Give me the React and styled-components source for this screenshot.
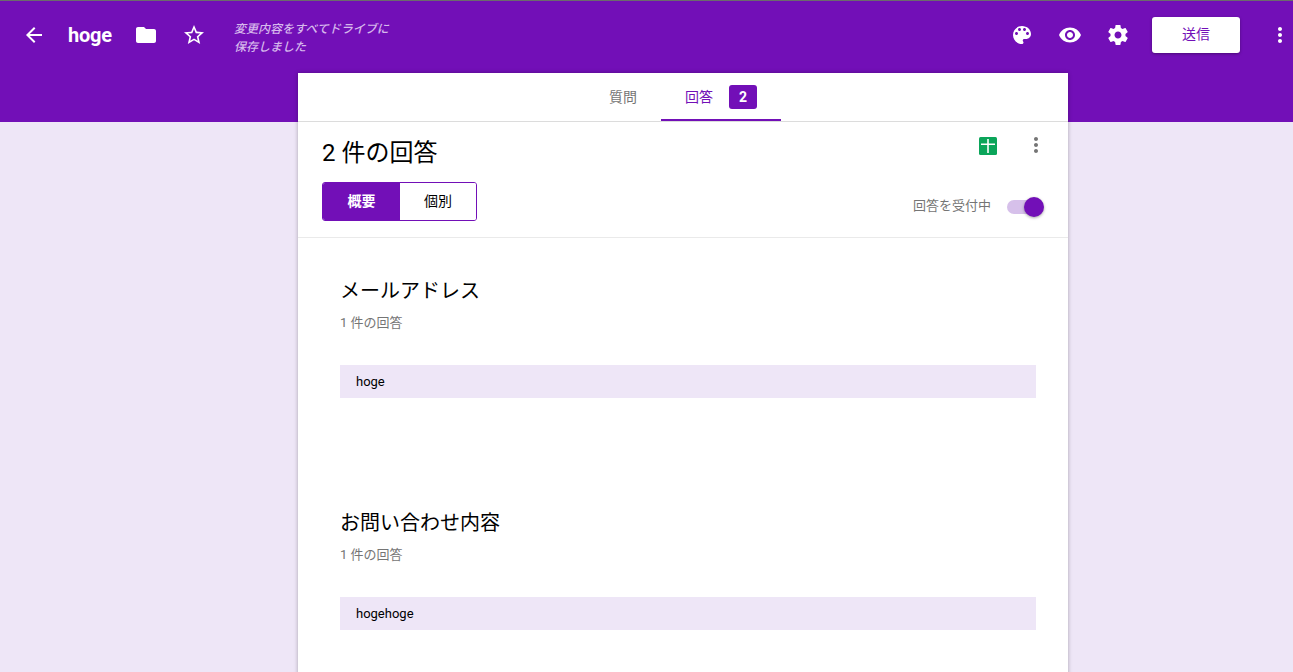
import React from "react";
import styled, { createGlobalStyle } from "styled-components";

const PURPLE = "#720fb7";
const TINT = "#eee6f7";

const Global = createGlobalStyle`
  html, body { margin: 0; padding: 0; height: 100%; overflow: hidden; }
  body { font-family: Roboto, "Noto Sans CJK JP", sans-serif; color: #000; }
  * { box-sizing: border-box; }
`;

const Page = styled.div`
  height: 672px;
  overflow: hidden;
  border-top: 1px solid #6b6b6b;
  background: linear-gradient(${PURPLE} 121px, ${TINT} 121px);
`;

const Toolbar = styled.header`
  display: flex;
  align-items: center;
  height: 72px;
  padding: 0 1px 4px 22px;
`;

const IconBox = styled.span`
  display: inline-flex;
  width: 24px;
  height: 24px;
  flex: none;
  margin-left: ${(p) => p.$ml || 0}px;
  margin-top: ${(p) => p.$mt || 0}px;
  color: ${(p) => p.$color || "#fff"};
  svg { display: block; width: 24px; height: 24px; fill: currentColor; }
`;

const DocName = styled.h1`
  margin: 0 0 0 22px;
  width: 44px;
  font-size: 20px;
  font-weight: 700;
  letter-spacing: -0.2px;
  line-height: 24px;
  color: #fff;
  white-space: nowrap;
`;

const SaveNote = styled.p`
  margin: 6px 0 0 28px;
  width: 160px;
  font-size: 12px;
  font-style: italic;
  font-weight: 500;
  line-height: 18px;
  color: #d6b8ec;
`;

const ToolbarEnd = styled.div`
  display: flex;
  align-items: center;
  margin-left: auto;
`;

const SendButton = styled.button`
  width: 88px;
  height: 36px;
  margin-left: 22px;
  padding: 0 0 4px;
  border: 0;
  border-radius: 3px;
  background: #fff;
  color: ${PURPLE};
  font: 400 14px Roboto, "Noto Sans CJK JP", sans-serif;
  box-shadow: 0 1px 3px rgba(0, 0, 0, 0.35);
`;

const Card = styled.main`
  width: 770px;
  margin: 0 0 0 298px;
  background: #fff;
  box-shadow: 0 0 4px rgba(0, 0, 0, 0.3);
`;

const Tabs = styled.nav`
  display: flex;
  justify-content: center;
  height: 49px;
  border-bottom: 1px solid #dcdcdc;
`;

const Tab = styled.div`
  display: flex;
  align-items: center;
  gap: 16px;
  height: 48px;
  padding: 2px 24px 0;
  font-size: 14px;
  color: ${(p) => (p.$active ? PURPLE : "#757575")};
  border-bottom: 2px solid ${(p) => (p.$active ? PURPLE : "transparent")};
`;

const TabLabel = styled.span`
  padding-bottom: 2px;
`;

const Badge = styled.span`
  display: inline-flex;
  align-items: center;
  justify-content: center;
  width: 28px;
  height: 24px;
  border-radius: 3px;
  background: ${PURPLE};
  color: #fff;
  font-size: 14px;
  font-weight: 700;
`;

const Head = styled.section`
  padding: 12px 24px 16px;
  border-bottom: 1px solid #eaeaea;
`;

const HeadTop = styled.div`
  display: flex;
  justify-content: space-between;
  align-items: flex-start;
  height: 34px;
`;

const Title = styled.h2`
  margin: 0;
  padding-top: 3px;
  font-size: 24px;
  font-weight: 400;
  line-height: 32px;
`;

const HeadActions = styled.div`
  display: flex;
  gap: 24px;
  margin-right: -4px;
`;

const HeadBottom = styled.div`
  display: flex;
  justify-content: space-between;
  align-items: flex-end;
  margin-top: 14px;
`;

const Segmented = styled.div`
  display: flex;
  width: 155px;
  height: 39px;
  border: 1px solid ${PURPLE};
  border-radius: 3px;
  overflow: hidden;
`;

const Segment = styled.div`
  display: flex;
  align-items: center;
  justify-content: center;
  width: ${(p) => (p.$active ? 77 : 76)}px;
  padding-bottom: 3px;
  font-size: 14px;
  font-weight: ${(p) => (p.$active ? 700 : 400)};
  background: ${(p) => (p.$active ? PURPLE : "#fff")};
  color: ${(p) => (p.$active ? "#fff" : "#000")};
`;

const Accepting = styled.div`
  display: flex;
  align-items: center;
  gap: 16px;
  padding-bottom: 4px;
  font-size: 13px;
  color: #757575;
`;

const AcceptLabel = styled.span`
  line-height: 20px;
  margin-top: -3px;
`;

const Switch = styled.div`
  position: relative;
  width: 37px;
  height: 20px;
  &::before {
    content: "";
    position: absolute;
    left: 0;
    top: 3px;
    width: 34px;
    height: 14px;
    border-radius: 7px;
    background: #d6c0ea;
  }
  &::after {
    content: "";
    position: absolute;
    right: 0;
    top: 0;
    width: 20px;
    height: 20px;
    border-radius: 50%;
    background: ${PURPLE};
    box-shadow: 0 1px 3px rgba(0, 0, 0, 0.35);
  }
`;

const Body = styled.div`
  padding: 38px 32px 60px 42px;
`;

const Question = styled.section`
  & + & { margin-top: 110px; }
`;

const QuestionTitle = styled.h3`
  margin: 0;
  padding-top: 1px;
  height: 28px;
  font-size: 20px;
  font-weight: 400;
  line-height: 28px;
`;

const Count = styled.p`
  margin: 8px 0 0;
  padding-top: 1px;
  height: 20px;
  font-size: 13px;
  line-height: 20px;
  color: #757575;
`;

const Answer = styled.div`
  display: flex;
  align-items: center;
  height: 33px;
  margin-top: 33px;
  padding-left: 16px;
  background: ${TINT};
  font-size: 13px;
`;

const Icon = ({ d, ...rest }) => (
  <IconBox {...rest}>
    <svg viewBox="0 0 24 24"><path d={d} /></svg>
  </IconBox>
);

const ARROW = "M20 11H7.83l5.59-5.59L12 4l-8 8 8 8 1.41-1.41L7.83 13H20v-2z";
const FOLDER = "M10 4H4c-1.1 0-1.99.9-1.99 2L2 18c0 1.1.9 2 2 2h16c1.1 0 2-.9 2-2V8c0-1.1-.9-2-2-2h-8l-2-2z";
const STAR = "M22 9.24l-7.19-.62L12 2 9.19 8.63 2 9.24l5.46 4.73L5.82 21 12 17.27 18.18 21l-1.63-7.03L22 9.24zM12 15.4l-3.76 2.27 1-4.28-3.32-2.88 4.38-.38L12 6.1l1.71 4.04 4.38.38-3.32 2.88 1 4.28L12 15.4z";
const PALETTE = "M12 3c-4.97 0-9 4.03-9 9s4.03 9 9 9c.83 0 1.5-.67 1.5-1.5 0-.39-.15-.74-.39-1.01-.23-.26-.38-.61-.38-.99 0-.83.67-1.5 1.5-1.5H16c2.76 0 5-2.24 5-5 0-4.42-4.03-8-9-8zm-5.5 9c-.83 0-1.5-.67-1.5-1.5S5.67 9 6.5 9 8 9.67 8 10.5 7.33 12 6.5 12zm3-4C8.67 8 8 7.33 8 6.5S8.67 5 9.5 5s1.5.67 1.5 1.5S10.33 8 9.5 8zm5 0c-.83 0-1.5-.67-1.5-1.5S13.67 5 14.5 5s1.5.67 1.5 1.5S15.33 8 14.5 8zm3 4c-.83 0-1.5-.67-1.5-1.5S16.67 9 17.5 9s1.5.67 1.5 1.5-.67 1.5-1.5 1.5z";
const EYE = "M12 4.5C7 4.5 2.73 7.61 1 12c1.73 4.39 6 7.5 11 7.5s9.27-3.11 11-7.5c-1.73-4.39-6-7.5-11-7.5zM12 17c-2.76 0-5-2.24-5-5s2.24-5 5-5 5 2.24 5 5-2.24 5-5 5zm0-8c-1.66 0-3 1.34-3 3s1.34 3 3 3 3-1.34 3-3-1.34-3-3-3z";
const GEAR = "M19.43 12.98c.04-.32.07-.64.07-.98s-.03-.66-.07-.98l2.11-1.65c.19-.15.24-.42.12-.64l-2-3.46c-.12-.22-.39-.3-.61-.22l-2.49 1c-.52-.4-1.08-.73-1.69-.98l-.38-2.65C14.46 2.18 14.25 2 14 2h-4c-.25 0-.46.18-.49.42l-.38 2.65c-.61.25-1.17.59-1.69.98l-2.49-1c-.23-.09-.49 0-.61.22l-2 3.46c-.13.22-.07.49.12.64l2.11 1.65c-.04.32-.07.65-.07.98s.03.66.07.98l-2.11 1.65c-.19.15-.24.42-.12.64l2 3.46c.12.22.39.3.61.22l2.49-1c.52.4 1.08.73 1.69.98l.38 2.65c.03.24.24.42.49.42h4c.25 0 .46-.18.49-.42l.38-2.65c.61-.25 1.17-.59 1.69-.98l2.49 1c.23.09.49 0 .61-.22l2-3.46c.12-.22.07-.49-.12-.64l-2.11-1.65zM12 15.5c-1.93 0-3.5-1.57-3.5-3.5s1.57-3.5 3.5-3.5 3.5 1.57 3.5 3.5-1.57 3.5-3.5 3.5z";
const MORE = "M12 8c1.1 0 2-.9 2-2s-.9-2-2-2-2 .9-2 2 .9 2 2 2zm0 2c-1.1 0-2 .9-2 2s.9 2 2 2 2-.9 2-2-.9-2-2-2zm0 6c-1.1 0-2 .9-2 2s.9 2 2 2 2-.9 2-2-.9-2-2-2z";

const SheetsIcon = () => (
  <IconBox>
    <svg viewBox="0 0 24 24">
      <rect x="3" y="3" width="18" height="18" rx="1.5" fill="#0ba55a" />
      <path d="M5 9.5h6.2V5h1.6v4.5H19V11h-6.2v8h-1.6v-8H5z" fill="#fff" />
    </svg>
  </IconBox>
);

export default function App() {
  return (
    <>
      <Global />
      <Page>
        <Toolbar>
          <Icon d={ARROW} />
          <DocName>hoge</DocName>
          <Icon d={FOLDER} $ml={22} />
          <Icon d={STAR} $ml={24} />
          <SaveNote>変更内容をすべてドライブに保存しました</SaveNote>
          <ToolbarEnd>
            <Icon d={PALETTE} />
            <Icon d={EYE} $ml={24} />
            <Icon d={GEAR} $ml={24} />
            <SendButton>送信</SendButton>
            <Icon d={MORE} $ml={28} $mt={-1} />
          </ToolbarEnd>
        </Toolbar>
        <Card>
          <Tabs>
            <Tab><TabLabel>質問</TabLabel></Tab>
            <Tab $active><TabLabel>回答</TabLabel><Badge>2</Badge></Tab>
          </Tabs>
          <Head>
            <HeadTop>
              <Title>2 件の回答</Title>
              <HeadActions>
                <SheetsIcon />
                <Icon d={MORE} $color="#757575" $mt={-1} />
              </HeadActions>
            </HeadTop>
            <HeadBottom>
              <Segmented>
                <Segment $active>概要</Segment>
                <Segment>個別</Segment>
              </Segmented>
              <Accepting><AcceptLabel>回答を受付中</AcceptLabel><Switch /></Accepting>
            </HeadBottom>
          </Head>
          <Body>
            <Question>
              <QuestionTitle>メールアドレス</QuestionTitle>
              <Count>1 件の回答</Count>
              <Answer>hoge</Answer>
            </Question>
            <Question>
              <QuestionTitle>お問い合わせ内容</QuestionTitle>
              <Count>1 件の回答</Count>
              <Answer>hogehoge</Answer>
            </Question>
          </Body>
        </Card>
      </Page>
    </>
  );
}
